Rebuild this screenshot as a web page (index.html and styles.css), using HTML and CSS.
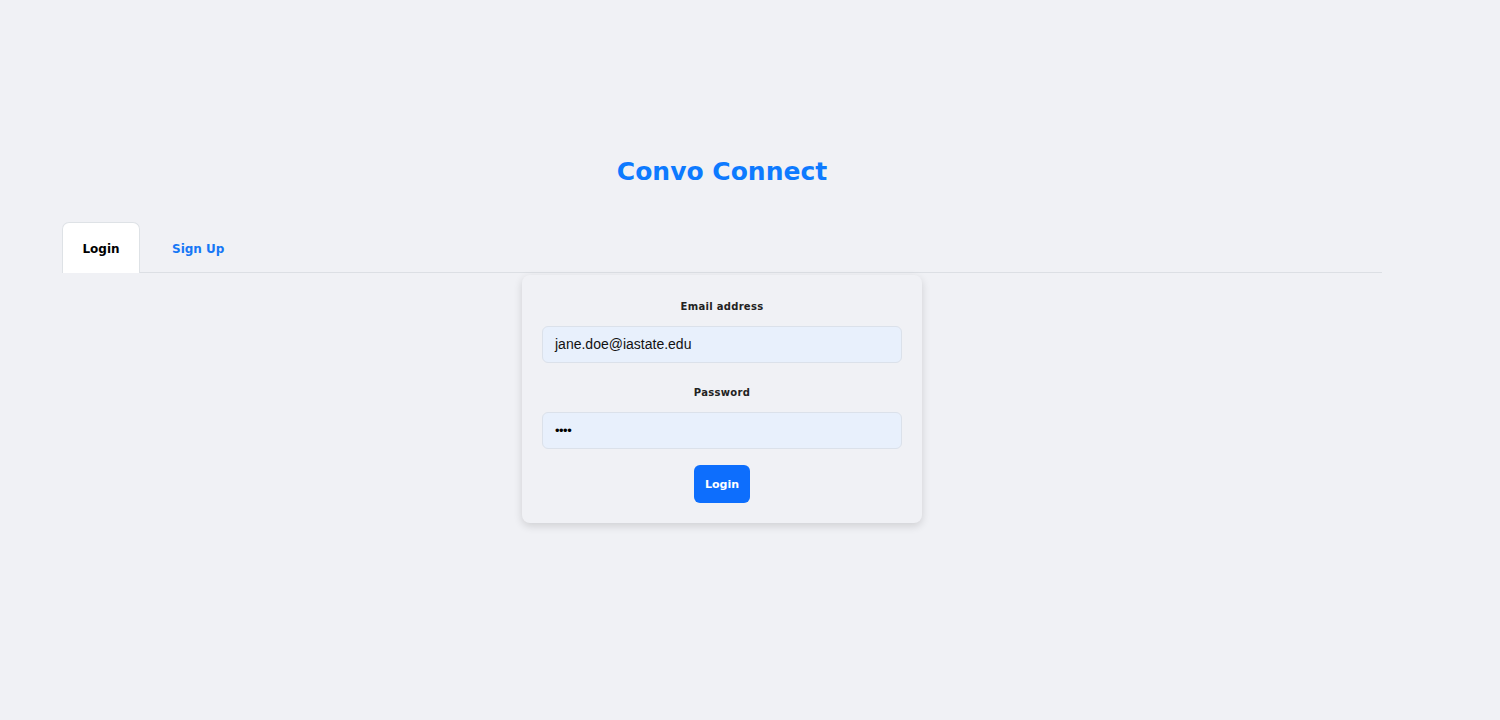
FILE: index.html
```html
<!DOCTYPE html>
<html>
<head>
<meta charset="utf-8">
<link rel="stylesheet" href="styles.css">
</head>
<body>
<div class="page">
  <h1 class="title">Convo Connect</h1>
  <div class="tabs">
    <div class="tab active">Login</div>
    <div class="tab link">Sign Up</div>
  </div>
  <div class="card">
    <label class="label">Email address</label>
    <div class="input">jane.doe@iastate.edu</div>
    <label class="label pw">Password</label>
    <div class="input dots">••••</div>
    <button class="btn">Login</button>
  </div>
</div>
</body>
</html>
```
FILE: styles.css
```css
html, body { margin: 0; padding: 0; }
body {
  background: #f0f1f5;
  width: 1500px;
  height: 720px;
  font-family: "DejaVu Sans", "Liberation Sans", sans-serif;
}
.page {
  width: 1320px;
  margin-left: 62px;
  padding-top: 152px;
  display: flex;
  flex-direction: column;
  align-items: center;
}
.title {
  margin: 0;
  font-size: 25px;
  line-height: 40px;
  font-weight: bold;
  color: #0d7aff;
  letter-spacing: 0;
}
.tabs {
  align-self: stretch;
  margin-top: 30px;
  display: flex;
  border-bottom: 1px solid #dcdfe4;
  height: 50px;
}
.tab {
  font-size: 12px;
  font-weight: bold;
  line-height: 52px;
  padding: 0 20px;
}
.tab.active {
  width: 78px;
  box-sizing: border-box;
  text-align: center;
  padding: 0;
  background: #fff;
  border: 1px solid #dee2e6;
  border-bottom: none;
  border-radius: 7px 7px 0 0;
  color: #000;
  height: 51px;
}
.tab.link {
  color: #1677f5;
  padding-left: 32px;
  line-height: 54px;
}
.card {
  margin-top: 2px;
  width: 400px;
  box-sizing: border-box;
  padding: 24px 20px 20px;
  background: #f0f1f5;
  border-radius: 8px;
  box-shadow: 0 3px 8px rgba(0,0,0,0.14);
  display: flex;
  flex-direction: column;
  align-items: center;
}
.label {
  font-size: 10px;
  font-weight: bold;
  color: #222;
  line-height: 16px;
  letter-spacing: 0.3px;
}
.label.pw { margin-top: 22px; }
.input {
  margin-top: 11px;
  align-self: stretch;
  height: 37px;
  box-sizing: border-box;
  background: #e8f0fc;
  border: 1px solid #dbe1ea;
  border-radius: 6px;
  padding: 0 12px;
  font-family: "Liberation Sans", Arial, sans-serif;
  font-size: 14px;
  line-height: 35px;
  color: #111;
}
.input.dots { font-size: 13px; letter-spacing: -0.5px; color: #000; }
.btn {
  margin-top: 16px;
  width: 56px;
  height: 38px;
  border: none;
  border-radius: 6px;
  background: #0d6efd;
  color: #fff;
  font-family: "DejaVu Sans", sans-serif;
  font-weight: bold;
  font-size: 11px;
  padding: 0;
}
```
